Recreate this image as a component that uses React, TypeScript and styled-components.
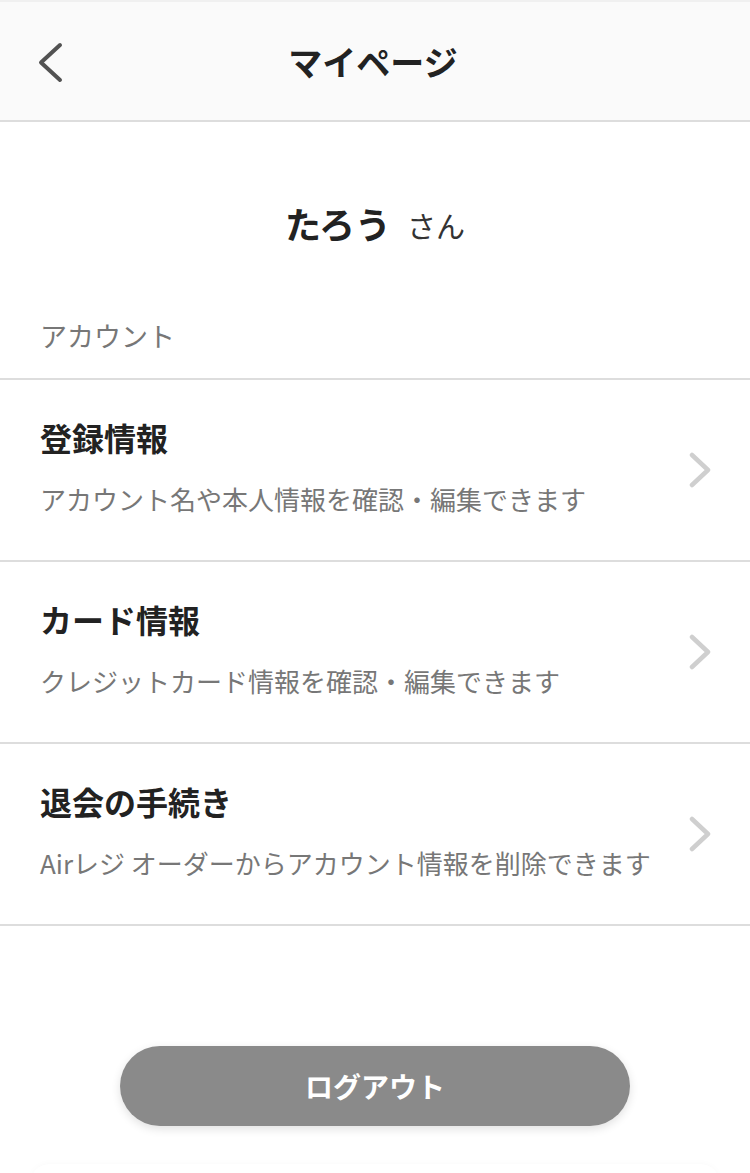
import styled, { createGlobalStyle } from 'styled-components';

const GlobalStyle = createGlobalStyle`
  html, body {
    margin: 0;
    padding: 0;
    background: #ffffff;
  }
  body {
    font-family: "Noto Sans CJK JP", "Noto Sans", sans-serif;
    color: #222222;
    -webkit-font-smoothing: antialiased;
  }
  * {
    box-sizing: border-box;
  }
`;

const menuItems = [
  { title: '登録情報', desc: 'アカウント名や本人情報を確認・編集できます' },
  { title: 'カード情報', desc: 'クレジットカード情報を確認・編集できます' },
  { title: '退会の手続き', desc: 'Airレジ オーダーからアカウント情報を削除できます' },
];

function App() {
  return (
    <Page>
      <GlobalStyle />
      <Header>
        <BackButton aria-label="戻る">
          <svg width="30" height="42" viewBox="0 0 30 42" fill="none">
            <path
              d="M22 3 L3 20.5 L22 38"
              stroke="#525252"
              strokeWidth="4"
              strokeLinecap="round"
              strokeLinejoin="round"
            />
          </svg>
        </BackButton>
        <HeaderTitle>マイページ</HeaderTitle>
      </Header>

      <Greeting>
        <UserName>たろう</UserName>
        <Honorific>さん</Honorific>
      </Greeting>

      <SectionLabel>アカウント</SectionLabel>

      <MenuList>
        {menuItems.map((item) => (
          <MenuRow key={item.title}>
            <RowText>
              <RowTitle>{item.title}</RowTitle>
              <RowDesc>{item.desc}</RowDesc>
            </RowText>
            <svg width="24" height="36" viewBox="0 0 24 36" fill="none">
              <path
                d="M4 3 L20 18 L4 33"
                stroke="#cfcfcf"
                strokeWidth="4.5"
                strokeLinecap="round"
                strokeLinejoin="round"
              />
            </svg>
          </MenuRow>
        ))}
      </MenuList>

      <ButtonArea>
        <LogoutButton>ログアウト</LogoutButton>
      </ButtonArea>

      <FooterCard />
    </Page>
  );
}

export default App;

const Page = styled.div`
  width: 750px;
  min-height: 1173px;
  overflow: hidden;
  background: #ffffff;
`;

const Header = styled.header`
  position: relative;
  height: 122px;
  display: flex;
  align-items: center;
  justify-content: center;
  background: #fafafa;
  border-top: 2px solid #f0f0f0;
  border-bottom: 2px solid #dddddd;
`;

const BackButton = styled.button`
  position: absolute;
  left: 38px;
  top: 40px;
  padding: 0;
  border: none;
  background: none;
  display: flex;
`;

const HeaderTitle = styled.h1`
  margin: 0 4px 0 0;
  font-size: 34px;
  font-weight: 700;
  line-height: 1;
  color: #222222;
  transform: translateY(1px);
`;

const Greeting = styled.div`
  height: 194px;
  display: flex;
  align-items: center;
  justify-content: center;
  padding-top: 8px;
`;

const UserName = styled.span`
  font-size: 36px;
  font-weight: 700;
  color: #222222;
`;

const Honorific = styled.span`
  margin-left: 16px;
  font-size: 29px;
  font-weight: 400;
  color: #333333;
  transform: translateY(2px);
`;

const SectionLabel = styled.div`
  padding: 0 40px 22px;
  font-size: 27px;
  line-height: 40px;
  color: #777777;
`;

const MenuList = styled.ul`
  margin: 0;
  padding: 0;
  list-style: none;
  border-top: 2px solid #dddddd;
`;

const MenuRow = styled.li`
  display: flex;
  align-items: center;
  justify-content: space-between;
  height: 182px;
  padding: 0 38px 0 40px;
  border-bottom: 2px solid #dddddd;
`;

const RowText = styled.div`
  display: flex;
  flex-direction: column;
  gap: 21px;
  padding-bottom: 8px;
`;

const RowTitle = styled.div`
  font-size: 32px;
  font-weight: 700;
  line-height: 44px;
  color: #222222;
`;

const RowDesc = styled.div`
  font-size: 26px;
  line-height: 38px;
  color: #777777;
`;

const ButtonArea = styled.div`
  display: flex;
  justify-content: center;
  padding-top: 120px;
`;

const LogoutButton = styled.button`
  width: 510px;
  height: 80px;
  border: none;
  border-radius: 40px;
  background: #8a8a8a;
  color: #ffffff;
  font-family: "Noto Sans CJK JP", "Noto Sans", sans-serif;
  font-size: 28px;
  font-weight: 700;
  box-shadow: 0 3px 10px rgba(0, 0, 0, 0.12);
`;

const FooterCard = styled.div`
  margin: 38px 30px 0;
  height: 60px;
  border-radius: 20px;
  background: #ffffff;
  box-shadow: 0 -1px 6px rgba(0, 0, 0, 0.025);
`;
